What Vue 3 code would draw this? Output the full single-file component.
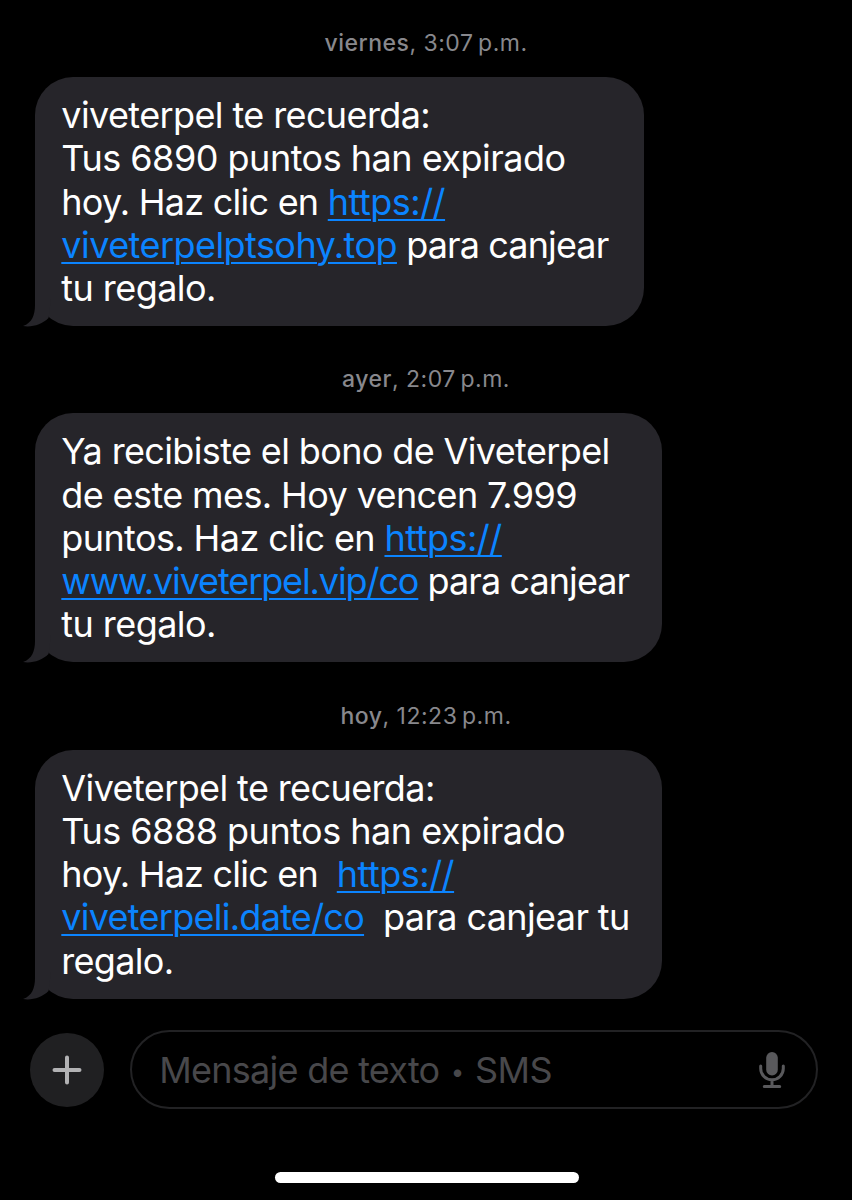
<script setup>
import { ref } from 'vue';

const draft = ref('');

// Each message is split in lines, each line in plain or link parts.
// track is the letter spacing of the part, in px
const messages = [
    {
        id: 1,
        day: 'viernes',
        time: '3:07\u2009p.m.',
        size: 'narrow',
        lines: [
            [{ text: 'viveterpel te recuerda:', track: -0.61 }],
            [{ text: 'Tus 6890 puntos han expirado', track: -0.5 }],
            [{ text: 'hoy. Haz clic en ', track: -0.76 }, { text: 'https://', track: -0.5, link: true }],
            [{ text: 'viveterpelptsohy.top', track: -0.55, link: true }, { text: ' para canjear', track: -0.88 }],
            [{ text: 'tu regalo.', track: -0.56 }],
        ],
    },
    {
        id: 2,
        day: 'ayer',
        time: '2:07\u2009p.m.',
        size: 'wide',
        lines: [
            [{ text: 'Ya recibiste el bono de Viveterpel', track: -0.63 }],
            [{ text: 'de este mes. Hoy vencen 7.999', track: -0.61 }],
            [{ text: 'puntos. Haz clic en ', track: -0.6 }, { text: 'https://', track: -0.5, link: true }],
            [{ text: 'www.viveterpel.vip/co', track: -1.11, link: true }, { text: ' para canjear', track: -0.92 }],
            [{ text: 'tu regalo.', track: -0.56 }],
        ],
    },
    {
        id: 3,
        day: 'hoy',
        time: '12:23\u2009p.m.',
        size: 'wide',
        lines: [
            [{ text: 'Viveterpel te recuerda:', track: -0.61 }],
            [{ text: 'Tus 6888 puntos han expirado', track: -0.5 }],
            [{ text: 'hoy. Haz clic en  ', track: -0.78 }, { text: 'https://', track: -0.5, link: true }],
            [{ text: 'viveterpeli.date/co', track: -0.73, link: true }, { text: '  para canjear tu', track: -0.62 }],
            [{ text: 'regalo.', track: -0.7 }],
        ],
    },
];
</script>
<template>
    <div class="screen">
        <main class="thread">
            <section v-for="message in messages" :key="message.id" class="message">
                <div class="stamp"><b>{{ message.day }}</b>, {{ message.time }}</div>
                <div class="bubble" :class="message.size">
                    <div v-for="(line, i) in message.lines" :key="i" class="line"><span v-for="(part, j) in line" :key="j" :class="{ link: part.link }" :style="{ letterSpacing: part.track + 'px' }">{{ part.text }}</span></div>
                    <svg class="tail" viewBox="0 0 28 48" width="28" height="48">
                        <path d="M12 0V26C12 36 9 44 0 47C9 48.500 19 45.500 25.500 39L28 20V0Z" />
                    </svg>
                </div>
            </section>
        </main>
        <footer class="composer">
            <button class="plus" aria-label="Agregar">
                <svg viewBox="0 0 30 30" width="30" height="30">
                    <path d="M15 2.500V27.500M2.500 15H27.500" />
                </svg>
            </button>
            <label class="field">
                <span v-if="!draft" class="placeholder">Mensaje de texto <span class="dot">•</span> <span class="sms">SMS</span></span>
                <input v-model="draft" class="input" />
                <svg class="mic" viewBox="0 0 26 38" width="26" height="38">
                    <rect x="7.200" y="1" width="11.600" height="23.500" rx="5.800" />
                    <path d="M1.700 15V17.500A11.300 11.300 0 0 0 24.300 17.500V15M13 29V35M5.300 35.500H20.700" />
                </svg>
            </label>
        </footer>
        <div class="home-bar"></div>
    </div>
</template>
<style>
body {
    margin: 0;
    background: #000;
}
</style>
<style scoped>
.screen {
    display: flex;
    flex-direction: column;
    box-sizing: border-box;
    width: 852px;
    height: 1200px;
    overflow: hidden;
    background: #000;
    color: #fff;
    font-family: Inter, "Liberation Sans", sans-serif;
}

.message {
    height: 336.300px;
}

.stamp {
    box-sizing: border-box;
    height: 77px;
    padding-top: 28px;
    text-align: center;
    font-size: 23px;
    line-height: 30px;
    letter-spacing: 0.500px;
    color: #88888d;
}

.stamp b {
    font-weight: 500;
}

.bubble {
    position: relative;
    box-sizing: border-box;
    height: 249px;
    margin-left: 35px;
    padding: 17px 0 0 26.300px;
    border-radius: 38px;
    background: #26252a;
}

.narrow {
    width: 609px;
}

.wide {
    width: 627px;
}

.line {
    height: 43.300px;
    line-height: 43.300px;
    font-size: 36px;
    white-space: pre;
}

.link {
    color: #0b84ff;
    cursor: pointer;
    text-decoration: underline;
    text-decoration-thickness: 2px;
    text-underline-offset: 4px;
}

/* little hook under the lower left corner */
.tail {
    position: absolute;
    left: -12px;
    bottom: -1px;
    fill: #26252a;
}

.composer {
    display: flex;
    align-items: center;
    gap: 26px;
    height: 80px;
    margin: 21px 34px 0 30.300px;
}

.plus {
    display: flex;
    flex: none;
    align-items: center;
    justify-content: center;
    width: 74px;
    height: 74px;
    padding: 0;
    border: none;
    border-radius: 50%;
    background: #202022;
}

.plus path {
    fill: none;
    stroke: #b2b2b4;
    stroke-width: 4;
    stroke-linecap: round;
}

.field {
    display: flex;
    flex: 1;
    align-items: center;
    box-sizing: border-box;
    min-width: 0;
    height: 79px;
    padding: 0 31px 0 27px;
    border: 2px solid #222224;
    border-radius: 40px;
}

.placeholder {
    flex: none;
    padding-top: 3px;
    color: #48484b;
    font-size: 36px;
    line-height: 44px;
    letter-spacing: -0.740px;
    white-space: pre;
}

.dot {
    margin: 0 2px;
    font-size: 24px;
    vertical-align: 3px;
}

.sms {
    letter-spacing: -0.500px;
}

.input {
    flex: 1;
    width: 0;
    min-width: 0;
    padding: 0;
    border: none;
    outline: none;
    background: none;
    color: #fff;
    font-family: inherit;
    font-size: 36px;
}

.mic {
    flex: none;
}

.mic rect {
    fill: #59595c;
}

.mic path {
    fill: none;
    stroke: #59595c;
    stroke-width: 3;
    stroke-linecap: round;
}

.home-bar {
    width: 304px;
    height: 11px;
    margin: 62px 273px 0 275px;
    border-radius: 6px;
    background: #fff;
}
</style>
